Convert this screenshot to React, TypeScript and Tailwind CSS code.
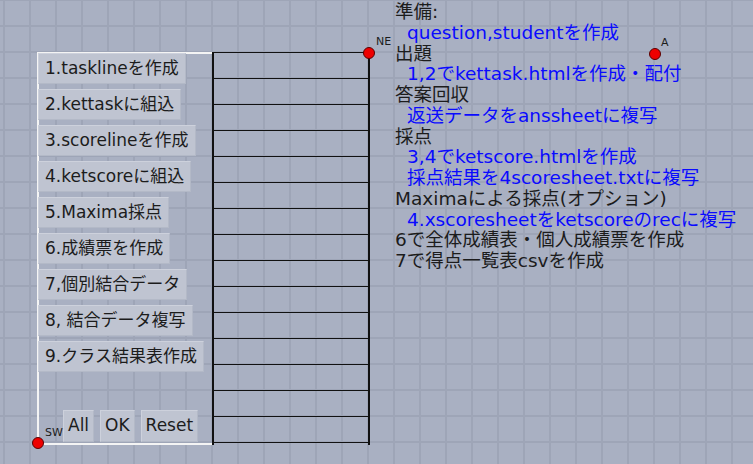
import React from "react";

const buttons = [
  "1.tasklineを作成",
  "2.kettaskに組込",
  "3.scorelineを作成",
  "4.ketscoreに組込",
  "5.Maxima採点",
  "6.成績票を作成",
  "7,個別結合データ",
  "8, 結合データ複写",
  "9.クラス結果表作成",
];

const notes: { text: string; blue?: boolean }[] = [
  { text: "準備:" },
  { text: "question,studentを作成", blue: true },
  { text: "出題" },
  { text: "1,2でkettask.htmlを作成・配付", blue: true },
  { text: "答案回収" },
  { text: "返送データをanssheetに複写", blue: true },
  { text: "採点" },
  { text: "3,4でketscore.htmlを作成", blue: true },
  { text: "採点結果を4scoresheet.txtに複写", blue: true },
  { text: "Maximaによる採点(オプション)" },
  { text: "4.xscoresheetをketscoreのrecに複写", blue: true },
  { text: "6で全体成績表・個人成績票を作成" },
  { text: "7で得点一覧表csvを作成" },
];

const font = "font-['DejaVu_Sans','Noto_Sans_CJK_JP',sans-serif]";

function Btn({ label, small }: { label: string; small?: boolean }) {
  return (
    <div
      className={
        "w-fit flex items-center bg-[#bfc4d1] border border-[#cdd1dc] border-b-[#b3b9c7] border-r-[#b3b9c7] text-[17px] text-[#1c1c1c] whitespace-nowrap " +
        (small ? "h-[32px] px-[4px]" : "h-[31px] px-[6px]")
      }
    >
      {label}
    </div>
  );
}

function Point({ className }: { className: string }) {
  return <div className={"absolute w-[12px] h-[12px] rounded-full bg-[#ee0000] border border-[#5a0000] " + className} />;
}

export default function App() {
  return (
    <div
      className={
        "relative w-[753px] h-[464px] overflow-hidden bg-[#a9b0c2] " +
        "bg-[linear-gradient(to_right,#9ea5b7_2px,transparent_2px),linear-gradient(to_bottom,#9ea5b7_2px,transparent_2px)] " +
        "[background-size:26px_26px] [background-position:3px_-1px] " +
        font
      }
    >
      {/* polygon SW-NE with buttons and table */}
      <div className="absolute left-[37px] top-[52px] w-[333px] h-[393px] flex">
        <div className="w-[175px] flex flex-col border-l-2 border-t-2 border-b-2 border-[#f4f4f4]">
          <div className="flex flex-col items-start gap-[5px] -ml-[1px] -mt-[1px]">
            {buttons.map((b) => (
              <Btn key={b} label={b} />
            ))}
          </div>
          <div className="mt-auto mb-[1px] ml-[24px] flex gap-[6px]">
            <Btn label="All" small />
            <Btn label="OK" small />
            <Btn label="Reset" small />
          </div>
        </div>
        <div className="flex-1 border-l-2 border-r-2 border-[#111] flex flex-col">
          {Array.from({ length: 15 }).map((_, i) => (
            <div key={i} className="h-[26px] border-t-[1.5px] border-[#111]" />
          ))}
          <div className="border-t-[1.5px] border-[#111]" />
        </div>
      </div>

      {/* points */}
      <Point className="left-[363px] top-[47px]" />
      <div className="absolute left-[376px] top-[34px] text-[11px] text-[#1c1c1c]">NE</div>
      <Point className="left-[32px] top-[437px]" />
      <div className="absolute left-[45px] top-[425px] text-[11px] text-[#1c1c1c]">SW</div>
      <Point className="left-[649px] top-[48px]" />
      <div className="absolute left-[661px] top-[35px] text-[11px] text-[#1c1c1c]">A</div>

      {/* notes */}
      <div className="absolute left-[395px] top-[2px] flex flex-col text-[18.5px] leading-[20.75px]">
        {notes.map((n) => (
          <div key={n.text} className={n.blue ? "pl-[12px] text-[#0a0aff]" : "text-[#1c1c1c]"}>
            {n.text}
          </div>
        ))}
      </div>
    </div>
  );
}
